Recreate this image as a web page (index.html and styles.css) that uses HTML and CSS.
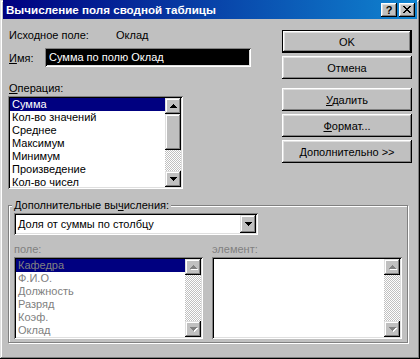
FILE: index.html
```html
<!DOCTYPE html>
<html lang="ru">
<head>
    <meta charset="UTF-8">
    <title>Вычисление поля сводной таблицы</title>
    <link rel="stylesheet" href="styles.css">
</head>
<body>
    <div class="window">
        <div class="titlebar">
            <span class="title">Вычисление поля сводной таблицы</span>
            <span class="tb-btn help">?</span>
            <span class="tb-btn close">
                <svg width="8" height="7" viewBox="0 0 8 7" shape-rendering="crispEdges">
                    <path d="M0 0h2v1h-2z M6 0h2v1h-2z M1 1h2v1h-2z M5 1h2v1h-2z M2 2h4v1h-4z M3 3h2v1h-2z M2 4h4v1h-4z M1 5h2v1h-2z M5 5h2v1h-2z M0 6h2v1h-2z M6 6h2v1h-2z" fill="#000"/>
                </svg>
            </span>
        </div>

        <div class="content">
            <div class="top">
                <div class="left">
                    <div class="source-row">
                        <span class="source-label">Исходное поле:</span>
                        <span>Оклад</span>
                    </div>
                    <div class="name-row">
                        <span class="name-label"><u>И</u>мя:</span>
                        <div class="field name-field"><span class="selected">Сумма по полю Оклад</span></div>
                    </div>
                    <div class="op-label"><u>О</u>перация:</div>
                    <div class="listbox ops">
                        <ul class="items">
                            <li class="active">Сумма</li>
                            <li>Кол-во значений</li>
                            <li>Среднее</li>
                            <li>Максимум</li>
                            <li>Минимум</li>
                            <li>Произведение</li>
                            <li>Кол-во чисел</li>
                        </ul>
                        <div class="scrollbar">
                            <div class="sb-btn">
                                <svg width="7" height="4" viewBox="0 0 7 4" shape-rendering="crispEdges"><path d="M3 0h1v1h-1z M2 1h3v1h-3z M1 2h5v1h-5z M0 3h7v1h-7z" fill="#000"/></svg>
                            </div>
                            <div class="sb-thumb"></div>
                            <div class="sb-track"></div>
                            <div class="sb-btn">
                                <svg width="7" height="4" viewBox="0 0 7 4" shape-rendering="crispEdges"><path d="M0 0h7v1h-7z M1 1h5v1h-5z M2 2h3v1h-3z M3 3h1v1h-1z" fill="#000"/></svg>
                            </div>
                        </div>
                    </div>
                </div>

                <div class="buttons">
                    <button class="btn default">OK</button>
                    <button class="btn">Отмена</button>
                    <button class="btn spaced"><u>У</u>далить</button>
                    <button class="btn"><u>Ф</u>ормат...</button>
                    <button class="btn"><u>Д</u>ополнительно &gt;&gt;</button>
                </div>
            </div>

            <div class="group">
                <span class="group-title">Дополнительные вы<u>ч</u>исления:</span>
                <div class="field combo">
                    <span class="combo-text">Доля от суммы по столбцу</span>
                    <div class="combo-btn">
                        <svg width="7" height="4" viewBox="0 0 7 4" shape-rendering="crispEdges"><path d="M0 0h7v1h-7z M1 1h5v1h-5z M2 2h3v1h-3z M3 3h1v1h-1z" fill="#000"/></svg>
                    </div>
                </div>

                <div class="lists">
                    <div class="col col-field">
                        <div class="disabled-label">поле:</div>
                        <div class="listbox small">
                            <ul class="items disabled">
                                <li class="active">Кафедра</li>
                                <li>Ф.И.О.</li>
                                <li>Должность</li>
                                <li>Разряд</li>
                                <li>Коэф.</li>
                                <li>Оклад</li>
                            </ul>
                            <div class="scrollbar">
                                <div class="sb-btn off">
                                    <svg width="8" height="5" viewBox="0 0 8 5" shape-rendering="crispEdges"><path d="M4 1h1v1h-1z M3 2h3v1h-3z M2 3h5v1h-5z M1 4h7v1h-7z" fill="#fff"/><path d="M3 0h1v1h-1z M2 1h3v1h-3z M1 2h5v1h-5z M0 3h7v1h-7z" fill="#808080"/></svg>
                                </div>
                                <div class="sb-track"></div>
                                <div class="sb-btn off">
                                    <svg width="8" height="5" viewBox="0 0 8 5" shape-rendering="crispEdges"><path d="M1 1h7v1h-7z M2 2h5v1h-5z M3 3h3v1h-3z M4 4h1v1h-1z" fill="#fff"/><path d="M0 0h7v1h-7z M1 1h5v1h-5z M2 2h3v1h-3z M3 3h1v1h-1z" fill="#808080"/></svg>
                                </div>
                            </div>
                        </div>
                    </div>
                    <div class="col col-item">
                        <div class="disabled-label">элемент:</div>
                        <div class="listbox small">
                            <ul class="items"></ul>
                            <div class="scrollbar">
                                <div class="sb-btn off">
                                    <svg width="8" height="5" viewBox="0 0 8 5" shape-rendering="crispEdges"><path d="M4 1h1v1h-1z M3 2h3v1h-3z M2 3h5v1h-5z M1 4h7v1h-7z" fill="#fff"/><path d="M3 0h1v1h-1z M2 1h3v1h-3z M1 2h5v1h-5z M0 3h7v1h-7z" fill="#808080"/></svg>
                                </div>
                                <div class="sb-track"></div>
                                <div class="sb-btn off">
                                    <svg width="8" height="5" viewBox="0 0 8 5" shape-rendering="crispEdges"><path d="M1 1h7v1h-7z M2 2h5v1h-5z M3 3h3v1h-3z M4 4h1v1h-1z" fill="#fff"/><path d="M0 0h7v1h-7z M1 1h5v1h-5z M2 2h3v1h-3z M3 3h1v1h-1z" fill="#808080"/></svg>
                                </div>
                            </div>
                        </div>
                    </div>
                </div>
            </div>
        </div>
    </div>
</body>
</html>
```

FILE: styles.css
```css
* {
    box-sizing: border-box;
}

body {
    margin: 0;
    background-color: #c0c0c0;
    font-family: 'Liberation Sans', Arial, sans-serif;
    font-size: 11px;
    color: #000;
}

u {
    text-decoration: underline;
    text-underline-offset: 1px;
}

.window {
    width: 420px;
    height: 359px;
    padding: 0 3px 3px 3px;
    background-color: #c0c0c0;
    box-shadow: inset -1px -1px #000, inset 1px 1px #dfdfdf,
                inset -2px -2px #808080, inset 2px 2px #fff;
}

/* title bar */
.titlebar {
    height: 19px;
    display: flex;
    align-items: center;
    padding: 0 2px 0 3px;
    background: linear-gradient(to right, #000080, #1084d0);
}

.title {
    flex: 1;
    color: #fff;
    font-weight: bold;
    font-size: 11.6px;
    white-space: nowrap;
}

.tb-btn {
    width: 16px;
    height: 14px;
    display: flex;
    align-items: center;
    justify-content: center;
    background-color: #c0c0c0;
    box-shadow: inset -1px -1px #000, inset 1px 1px #fff,
                inset -2px -2px #808080, inset 2px 2px #dfdfdf;
    font-weight: bold;
    font-size: 11px;
    line-height: 14px;
}

.tb-btn.close {
    margin-left: 2px;
}

.tb-btn.help {
    padding-top: 1px;
}

/* content */
.content {
    padding: 0 5px;
}

.top {
    display: flex;
    justify-content: space-between;
}

.left {
    width: 244px;
}

.source-row {
    margin-top: 10px;
    height: 13px;
    line-height: 13px;
    padding-left: 1px;
}

.source-label {
    display: inline-block;
    width: 104px;
}

.name-row {
    margin-top: 6px;
    display: flex;
    align-items: center;
}

.name-label {
    width: 37px;
    padding-left: 1px;
}

.field {
    background-color: #fff;
    padding: 2px;
    box-shadow: inset 1px 1px #808080, inset -1px -1px #fff,
                inset 2px 2px #000, inset -2px -2px #dfdfdf;
}

.name-field {
    width: 206px;
    height: 19px;
    display: flex;
}

.name-field .selected {
    flex: 1;
    background-color: #000;
    color: #fff;
    line-height: 15px;
    padding-left: 2px;
    white-space: nowrap;
}

.op-label {
    margin-top: 15px;
    height: 13px;
    line-height: 13px;
    padding-left: 1px;
}

/* list boxes */
.listbox {
    display: flex;
    background-color: #fff;
    padding: 2px;
    box-shadow: inset 1px 1px #808080, inset -1px -1px #fff,
                inset 2px 2px #000, inset -2px -2px #dfdfdf;
}

.listbox.ops {
    margin-top: 1px;
    width: 175px;
    height: 93px;
}

.items {
    flex: 1;
    list-style: none;
    margin: 0;
    padding: 0;
    overflow: hidden;
}

.items li {
    height: 13px;
    line-height: 13px;
    padding-left: 2px;
    white-space: nowrap;
}

.items li.active {
    background-color: #000080;
    color: #fff;
}

.items.disabled li {
    color: #808080;
}

.scrollbar {
    width: 16px;
    display: flex;
    flex-direction: column;
}

.sb-btn {
    width: 16px;
    height: 16px;
    flex-shrink: 0;
    display: flex;
    align-items: center;
    justify-content: center;
    background-color: #c0c0c0;
    box-shadow: inset -1px -1px #000, inset 1px 1px #dfdfdf,
                inset -2px -2px #808080, inset 2px 2px #fff;
}

.sb-btn.off svg {
    margin: 1px 0 0 1px;
}

.sb-thumb {
    height: 36px;
    flex-shrink: 0;
    background-color: #c0c0c0;
    box-shadow: inset -1px -1px #000, inset 1px 1px #dfdfdf,
                inset -2px -2px #808080, inset 2px 2px #fff;
}

.sb-track {
    flex: 1;
    background-image: repeating-conic-gradient(#c0c0c0 0 25%, #fff 0 50%);
    background-size: 2px 2px;
}

/* buttons */
.buttons {
    width: 130px;
    margin-top: 11px;
    display: flex;
    flex-direction: column;
    gap: 3px;
}

.btn {
    height: 23px;
    padding: 0;
    border: none;
    background-color: #c0c0c0;
    font-family: inherit;
    font-size: 11px;
    color: #000;
    box-shadow: inset -1px -1px #000, inset 1px 1px #fff,
                inset -2px -2px #808080, inset 2px 2px #dfdfdf;
}

.btn.default {
    border: 1px solid #000;
}

.btn.spaced {
    margin-top: 6px;
}

/* group box */
.group {
    position: relative;
    margin-top: 16px;
    width: 400px;
    height: 138px;
    border: 1px solid #808080;
    box-shadow: inset 1px 1px #fff, 1px 1px #fff;
    padding: 7px 0 0 5px;
}

.group-title {
    position: absolute;
    top: -7px;
    left: 3px;
    padding: 0 2px;
    line-height: 13px;
    background-color: #c0c0c0;
}

.combo {
    width: 244px;
    height: 22px;
    display: flex;
    align-items: center;
}

.combo-text {
    flex: 1;
    padding-left: 2px;
    white-space: nowrap;
}

.combo-btn {
    width: 16px;
    height: 18px;
    display: flex;
    align-items: center;
    justify-content: center;
    background-color: #c0c0c0;
    box-shadow: inset -1px -1px #000, inset 1px 1px #dfdfdf,
                inset -2px -2px #808080, inset 2px 2px #fff;
}

.lists {
    display: flex;
    gap: 9px;
    margin-top: 8px;
}

.disabled-label {
    height: 13px;
    line-height: 13px;
    color: #808080;
    margin-bottom: 1px;
}

.col-field {
    width: 189px;
}

.col-item {
    width: 190px;
}

.listbox.small {
    height: 82px;
}
```
